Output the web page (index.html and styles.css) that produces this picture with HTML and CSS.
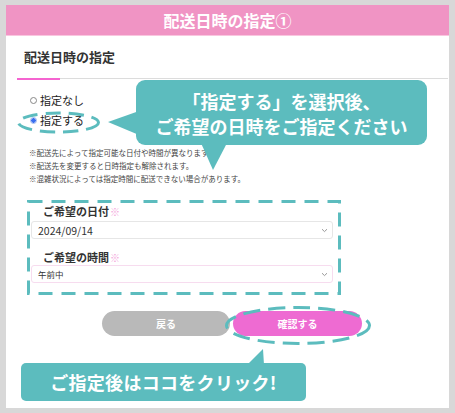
FILE: index.html
```html
<!DOCTYPE html>
<html lang="ja">
<head>
<meta charset="utf-8">
<link rel="stylesheet" href="styles.css">
</head>
<body>
<div class="frame">
  <div class="header">配送日時の指定①</div>
  <div class="tab">配送日時の指定</div>
  <div class="tabline"><div class="tabline-active"></div><div class="tabline-rest"></div></div>

  <div class="radios">
    <div class="radio-row"><span class="radio"></span><span>指定なし</span></div>
    <div class="radio-row"><span class="radio checked"></span><span>指定する</span></div>
  </div>

  <div class="notes">
    <p>※配送先によって指定可能な日付や時間が異なります。</p>
    <p>※配送先を変更すると日時指定も解除されます。</p>
    <p>※混雑状況によっては指定時間に配送できない場合があります。</p>
  </div>

  <div class="fields">
    <div class="label">ご希望の日付<span class="req">※</span></div>
    <div class="select"><span class="val">2024/09/14</span><svg class="chev" width="7" height="5" viewBox="0 0 7 5"><path d="M1 1.2 L3.5 3.6 L6 1.2" fill="none" stroke="#999" stroke-width="1"/></svg></div>
    <div class="label second">ご希望の時間<span class="req">※</span></div>
    <div class="select pinkish"><span class="val small">午前中</span><svg class="chev" width="7" height="5" viewBox="0 0 7 5"><path d="M1 1.2 L3.5 3.6 L6 1.2" fill="none" stroke="#999" stroke-width="1"/></svg></div>
  </div>

  <div class="buttons">
    <div class="btn back">戻る</div>
    <div class="btn confirm">確認する</div>
  </div>

  <svg class="overlay" width="443" height="403" viewBox="0 0 443 403">
    <polygon points="102,117 133,106 133,130" fill="#5cbcbe"/>
    <polygon points="195,138 221,138 207,165" fill="#5cbcbe"/>
    <polygon points="241,360 258,360 257,344" fill="#5cbcbe"/>
    <ellipse cx="52.5" cy="117.5" rx="40" ry="9.5" fill="none" stroke="#5cbcbe" stroke-width="3" stroke-dasharray="15 8"/>
    <rect x="22.5" y="196.5" width="311" height="92" fill="none" stroke="#5cbcbe" stroke-width="3" stroke-dasharray="14 9"/>
    <ellipse cx="292" cy="320.5" rx="71.5" ry="18" fill="none" stroke="#5cbcbe" stroke-width="3" stroke-dasharray="17 8"/>
  </svg>

  <div class="bubble top-bubble">「指定する」を選択後、<br>ご希望の日時をご指定ください</div>
  <div class="bubble bottom-bubble">ご指定後はココをクリック!</div>
</div>
</body>
</html>
```
FILE: styles.css
```css
* { box-sizing: border-box; }
html, body { margin: 0; padding: 0; }
body {
  background: #d8d8d8;
  padding: 5px 6px;
  width: 455px;
  height: 413px;
  overflow: hidden;
  font-family: "Noto Sans CJK JP", "Noto Sans", sans-serif;
  color: #333;
}
.frame {
  position: relative;
  width: 443px;
  height: 403px;
  background: #fff;
  overflow: hidden;
}
.header {
  height: 31px;
  background: #f094c4;
  border-bottom: 1px solid #f9c6df;
  color: #fff;
  font-weight: bold;
  font-size: 16px;
  line-height: 30px;
  text-align: center;
}
.tab {
  height: 41px;
  line-height: 42px;
  padding-left: 18px;
  font-size: 13px;
  font-weight: bold;
  color: #333;
}
.tabline {
  display: flex;
  align-items: center;
  height: 3px;
  margin: 0 1px 0 11px;
}
.tabline-active { width: 43px; height: 2px; background: #f564d0; }
.tabline-rest { flex: 1; height: 1px; background: #dcdcdc; }

.radios { margin-top: 10px; padding-left: 24px; }
.radio-row {
  display: flex;
  align-items: center;
  height: 20px;
  font-size: 11px;
  color: #222;
}
.radio {
  width: 7px;
  height: 7px;
  border-radius: 50%;
  border: 1px solid #888;
  margin-right: 3px;
  background: #fff;
}
.radio.checked {
  border: 1px solid #9fb8f0;
  background: radial-gradient(circle, #3a6ff0 0 2px, #cfdcfb 2.5px);
}

.notes { margin-top: 16px; padding-left: 23px; }
.notes p {
  margin: 0;
  font-size: 7.5px;
  line-height: 13px;
  color: #444;
  white-space: nowrap;
}

.fields { margin-top: 18px; }
.label {
  height: 16px;
  line-height: 16px;
  padding-left: 37px;
  font-size: 11px;
  font-weight: bold;
  color: #333;
}
.label.second { margin-top: 10px; }
.req { color: #f3a3da; font-weight: normal; font-size: 10px; margin-left: 1px; }
.select {
  margin-top: 2px;
  margin-left: 25px;
  width: 302px;
  height: 18px;
  border: 1px solid #e6e6e6;
  border-radius: 3px;
  display: flex;
  align-items: center;
  justify-content: space-between;
  padding: 0 4px 0 6px;
}
.select.pinkish { border-color: #f7dcef; margin-top: 0; }
.val { font-size: 10.5px; color: #333; }
.val.small { font-size: 8.5px; }
.chev { display: block; }

.buttons {
  display: flex;
  gap: 3px;
  margin-top: 28px;
  padding-left: 96px;
}
.btn {
  height: 25px;
  border-radius: 13px;
  color: #fff;
  font-weight: bold;
  font-size: 10px;
  line-height: 25px;
  text-align: center;
}
.btn.back { width: 128px; background: #b9b9b9; }
.btn.confirm { width: 129px; background: #ee6bd2; }

.overlay { position: absolute; left: 0; top: 0; }
.bubble {
  position: absolute;
  background: #5cbcbe;
  color: #fff;
  font-weight: bold;
  text-align: center;
}
.top-bubble {
  left: 130px;
  top: 75px;
  width: 291px;
  height: 65px;
  border-radius: 9px;
  padding-top: 9px;
  font-size: 18px;
  line-height: 25px;
}
.bottom-bubble {
  left: 15px;
  top: 358px;
  width: 285px;
  height: 38px;
  border-radius: 5px;
  font-size: 18px;
  line-height: 38px;
  letter-spacing: 0.3px;
}
```
